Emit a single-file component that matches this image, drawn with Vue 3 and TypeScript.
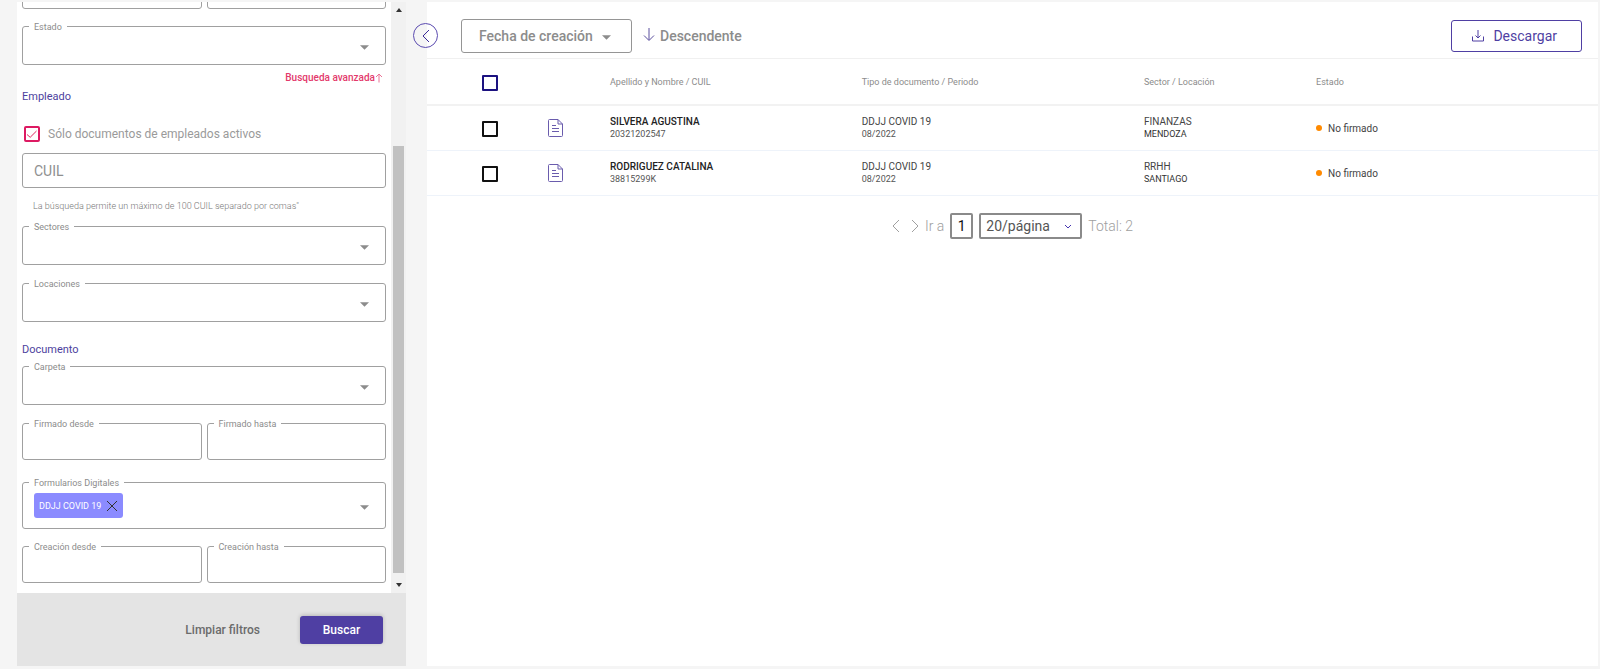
<script setup lang="ts">
import { ref } from 'vue'

interface DocumentRow {
  name: string
  cuil: string
  type: string
  period: string
  sector: string
  location: string
  status: string
  selected: boolean
}

const onlyActive = ref(true)
const cuil = ref('')
const page = ref('1')
const allSelected = ref(false)
const descending = ref(true)
const forms = ref<string[]>(['DDJJ COVID 19'])

const rows = ref<DocumentRow[]>([
  {
    name: 'SILVERA AGUSTINA',
    cuil: '20321202547',
    type: 'DDJJ COVID 19',
    period: '08/2022',
    sector: 'FINANZAS',
    location: 'MENDOZA',
    status: 'No firmado',
    selected: false,
  },
  {
    name: 'RODRIGUEZ CATALINA',
    cuil: '38815299K',
    type: 'DDJJ COVID 19',
    period: '08/2022',
    sector: 'RRHH',
    location: 'SANTIAGO',
    status: 'No firmado',
    selected: false,
  },
])

function toggleAll(): void {
  rows.value.forEach((row) => (row.selected = allSelected.value))
}

function removeForm(form: string): void {
  forms.value = forms.value.filter((item) => item !== form)
}
</script>

<template>
  <div class="page">
    <aside class="sidebar">
      <div class="scroll-area">
        <form class="filters" @submit.prevent>
          <div class="pair first">
            <div class="field date"><input type="text" aria-label="Período desde" /></div>
            <div class="field date"><input type="text" aria-label="Período hasta" /></div>
          </div>

          <div class="field estado">
            <label for="estado">Estado</label>
            <select id="estado"></select>
            <svg class="caret" viewBox="0 0 8 4"><path d="M0 0h8L4 4z" /></svg>
          </div>

          <button type="button" class="advanced">
            Busqueda avanzada<svg viewBox="0 0 8 10"><path d="M4 9.500V1M1 4l3-3 3 3" /></svg>
          </button>

          <h2 class="heading empleado">Empleado</h2>
          <label class="active-only">
            <input v-model="onlyActive" type="checkbox" />
            <svg class="tick" viewBox="0 0 16 16"><path d="M3 8.500l3.200 2.800L12.500 5" /></svg>
            <span>Sólo documentos de empleados activos</span>
          </label>

          <div class="field cuil">
            <input v-model="cuil" type="text" placeholder="CUIL" aria-label="CUIL" />
          </div>
          <p class="hint">La búsqueda permite un máximo de 100 CUIL separado por comas"</p>

          <div class="field sectores">
            <label for="sectores">Sectores</label>
            <select id="sectores"></select>
            <svg class="caret" viewBox="0 0 8 4"><path d="M0 0h8L4 4z" /></svg>
          </div>
          <div class="field locaciones">
            <label for="locaciones">Locaciones</label>
            <select id="locaciones"></select>
            <svg class="caret" viewBox="0 0 8 4"><path d="M0 0h8L4 4z" /></svg>
          </div>

          <h2 class="heading documento">Documento</h2>
          <div class="field carpeta">
            <label for="carpeta">Carpeta</label>
            <select id="carpeta"></select>
            <svg class="caret" viewBox="0 0 8 4"><path d="M0 0h8L4 4z" /></svg>
          </div>

          <div class="pair firmado">
            <div class="field date">
              <label for="firmado-desde">Firmado desde</label>
              <input id="firmado-desde" type="text" />
            </div>
            <div class="field date">
              <label for="firmado-hasta">Firmado hasta</label>
              <input id="firmado-hasta" type="text" />
            </div>
          </div>

          <div class="field formularios">
            <label for="formularios">Formularios Digitales</label>
            <span v-for="form in forms" :key="form" class="chip">
              {{ form }}
              <button type="button" :aria-label="'Quitar ' + form" @click="removeForm(form)">
                <svg viewBox="0 0 12 12"><path d="M1 1l10 10M11 1L1 11" /></svg>
              </button>
            </span>
            <select id="formularios"></select>
            <svg class="caret" viewBox="0 0 8 4"><path d="M0 0h8L4 4z" /></svg>
          </div>

          <div class="pair creacion">
            <div class="field date">
              <label for="creacion-desde">Creación desde</label>
              <input id="creacion-desde" type="text" />
            </div>
            <div class="field date">
              <label for="creacion-hasta">Creación hasta</label>
              <input id="creacion-hasta" type="text" />
            </div>
          </div>
        </form>

        <div class="scrollbar" aria-hidden="true">
          <svg viewBox="0 0 6 4"><path d="M0 4h6L3 0z" /></svg>
          <div class="track"><div class="thumb"></div></div>
          <svg viewBox="0 0 6 4"><path d="M0 0h6L3 4z" /></svg>
        </div>
      </div>

      <footer class="actions">
        <button type="button" class="clear">Limpiar filtros</button>
        <button type="button" class="search">Buscar</button>
      </footer>
    </aside>

    <main class="content">
      <button type="button" class="collapse" aria-label="Ocultar filtros">
        <svg viewBox="0 0 8 14"><path d="M7 1L1 7l6 6" /></svg>
      </button>

      <header class="toolbar">
        <div class="sort">
          <select aria-label="Ordenar por">
            <option>Fecha de creación</option>
          </select>
          <svg class="caret" viewBox="0 0 8 4"><path d="M0 0h8L4 4z" /></svg>
        </div>
        <button type="button" class="direction" @click="descending = !descending">
          <svg viewBox="0 0 12 14"><path d="M6 0v12M1 7.500l5 5 5-5" /></svg>
          {{ descending ? 'Descendente' : 'Ascendente' }}
        </button>
        <button type="button" class="download">
          <svg viewBox="0 0 12 12"><path d="M6 0v8M3.500 5.500L6 8l2.500-2.500M.5 6.500v4.500h11V6.500" /></svg>
          Descargar
        </button>
      </header>

      <table class="documents">
        <colgroup>
          <col class="col-check" />
          <col class="col-icon" />
          <col class="col-name" />
          <col class="col-type" />
          <col class="col-sector" />
          <col />
        </colgroup>
        <thead>
          <tr>
            <th class="check">
              <input v-model="allSelected" type="checkbox" aria-label="Seleccionar todos" @change="toggleAll" />
            </th>
            <th></th>
            <th>Apellido y Nombre / CUIL</th>
            <th>Tipo de documento / Periodo</th>
            <th>Sector / Locación</th>
            <th>Estado</th>
          </tr>
        </thead>
        <tbody>
          <tr v-for="row in rows" :key="row.cuil">
            <td class="check">
              <input v-model="row.selected" type="checkbox" :aria-label="'Seleccionar ' + row.name" />
            </td>
            <td class="icon">
              <svg viewBox="0 0 15 18">
                <path d="M1.500.5H10l4.500 4.500v11.500a1 1 0 0 1-1 1h-12a1 1 0 0 1-1-1v-15a1 1 0 0 1 1-1z" />
                <path d="M10 .5V5h4.500M4 6.500h4M4 9.500h7M4 12.500h7" />
              </svg>
            </td>
            <td>
              <span class="main-line strong">{{ row.name }}</span>
              <span class="sub-line">{{ row.cuil }}</span>
            </td>
            <td>
              <span class="main-line">{{ row.type }}</span>
              <span class="sub-line">{{ row.period }}</span>
            </td>
            <td>
              <span class="main-line">{{ row.sector }}</span>
              <span class="sub-line dark">{{ row.location }}</span>
            </td>
            <td><span class="status">{{ row.status }}</span></td>
          </tr>
        </tbody>
      </table>

      <nav class="pagination" aria-label="Paginación">
        <button type="button" class="step" aria-label="Anterior">
          <svg viewBox="0 0 8 14"><path d="M7 1L1 7l6 6" /></svg>
        </button>
        <button type="button" class="step" aria-label="Siguiente">
          <svg viewBox="0 0 8 14"><path d="M1 1l6 6-6 6" /></svg>
        </button>
        <label for="page">Ir a</label>
        <input id="page" v-model="page" type="text" />
        <div class="page-size">
          <select aria-label="Resultados por página">
            <option>20/página</option>
          </select>
          <svg viewBox="0 0 8 5"><path d="M1 1l3 3 3-3" /></svg>
        </div>
        <span>Total: {{ rows.length }}</span>
      </nav>
    </main>
  </div>
</template>

<style>
body {
  background: #f5f5f5;
}
</style>

<style scoped>
.page {
  box-sizing: border-box;
  display: flex;
  gap: 21px;
  height: 100vh;
  padding: 2px 2px 3px 17px;
  font-family: Roboto, "Liberation Sans", sans-serif;
  color: #8c8c8c;
}

.page *,
.page *::before {
  box-sizing: border-box;
}

button,
input,
select {
  margin: 0;
  padding: 0;
  border: 0;
  background: none;
  color: inherit;
  font: inherit;
  appearance: none;
}

button,
select {
  cursor: pointer;
}

svg {
  display: block;
  flex: none;
  fill: none;
  stroke: currentColor;
}

.sidebar {
  display: flex;
  flex: none;
  flex-direction: column;
  width: 389px;
  background: #fff;
}

.scroll-area {
  display: flex;
  flex: 1;
  min-height: 0;
  overflow: hidden;
}

.filters {
  display: flex;
  flex: 1;
  flex-direction: column;
  justify-content: flex-end;
  min-width: 0;
  padding: 0 5px 10px;
}

.filters > * {
  flex: none;
}

.field {
  position: relative;
  display: flex;
  align-items: center;
  height: 39px;
  border: 1px solid #a0a0a0;
  border-radius: 3px;
}

.field label {
  position: absolute;
  top: -6px;
  left: 6px;
  padding: 0 5px;
  background: #fff;
  font-size: 9px;
  line-height: 12px;
}

.field select,
.field input {
  flex: 1;
  align-self: stretch;
  min-width: 0;
  padding: 0 11px;
}

.caret {
  position: absolute;
  right: 16px;
  width: 9px;
  height: 5px;
  margin-top: 3px;
  fill: #8c8c8c;
  stroke: none;
  pointer-events: none;
}

.pair {
  display: grid;
  grid-template-columns: repeat(2, minmax(0, 1fr));
  gap: 5px;
}

.field.date {
  height: 37px;
}

.estado {
  margin-top: 17px;
}

.advanced {
  display: flex;
  align-items: center;
  align-self: flex-end;
  margin: 5px 3px 0 0;
  color: #e33a6c;
  font-size: 10px;
  font-weight: 500;
  line-height: 16px;
}

.advanced svg {
  width: 8px;
  height: 10px;
  opacity: 0.7;
}

.heading {
  margin: 0;
  color: #4d3f9e;
  font-size: 11px;
  font-weight: 400;
  line-height: 16px;
}

.empleado {
  margin-top: 3px;
}

.active-only {
  position: relative;
  display: flex;
  align-items: center;
  gap: 8px;
  margin: 21px 0 0 2px;
  font-size: 12px;
  line-height: 16px;
}

.active-only span {
  color: #9a9a9a;
}

.active-only input {
  width: 16px;
  height: 16px;
  border: 2px solid #dd1a62;
  border-radius: 2px;
}

.tick {
  position: absolute;
  left: 0;
  width: 16px;
  height: 16px;
  color: #e0245e;
  pointer-events: none;
  visibility: hidden;
}

.active-only input:checked + .tick {
  visibility: visible;
}

.field.cuil {
  height: 35px;
  margin-top: 11px;
  font-size: 14px;
}

.cuil input::placeholder {
  color: #8f8f8f;
}

.hint {
  margin: 12px 0 0 11px;
  font-size: 9px;
  font-weight: 300;
  line-height: 12px;
  color: #777;
}

.sectores {
  margin-top: 14px;
}

.locaciones,
.carpeta + .firmado {
  margin-top: 18px;
}

.documento {
  margin-top: 20px;
}

.carpeta {
  margin-top: 8px;
}

.field.formularios {
  height: 47px;
  margin-top: 22px;
  padding-left: 11px;
}

.creacion {
  margin-top: 17px;
}

.chip {
  display: flex;
  align-items: center;
  gap: 5px;
  height: 25px;
  padding: 0 5px;
  border-radius: 3px;
  background: #8b8bff;
  color: #fff;
  font-size: 9px;
}

.chip svg {
  width: 12px;
  height: 12px;
  color: #333;
}

.scrollbar {
  display: flex;
  flex: none;
  flex-direction: column;
  align-items: center;
  gap: 6px;
  width: 15px;
  padding: 6px 0;
  background: #f1f1f1;
}

.scrollbar svg {
  width: 6px;
  height: 4px;
  fill: #333;
  stroke: none;
}

.track {
  display: flex;
  flex: 1;
  flex-direction: column;
  justify-content: flex-end;
  align-self: stretch;
  padding: 0 2px 4px;
}

.thumb {
  height: 77%;
  background: #c1c1c1;
}

.actions {
  display: flex;
  flex: none;
  align-items: center;
  justify-content: flex-end;
  gap: 40px;
  height: 73px;
  padding-right: 23px;
  background: #e4e4e4;
  font-size: 12px;
  font-weight: 500;
}

.clear {
  color: #6b6b6b;
}

.search {
  width: 83px;
  height: 28px;
  border-radius: 3px;
  background: #4f3fa3;
  box-shadow: 0 -1px 4px rgba(0, 0, 0, 0.2);
  color: #fff;
}

.content {
  position: relative;
  flex: 1;
  min-width: 0;
  background: #fff;
}

.collapse {
  position: absolute;
  top: 21px;
  left: -14px;
  display: flex;
  align-items: center;
  justify-content: center;
  width: 25px;
  height: 25px;
  border: 1px solid #5b4bb0;
  border-radius: 50%;
  color: #3a2a98;
}

.collapse svg {
  width: 8px;
  height: 14px;
}

.toolbar {
  display: flex;
  align-items: center;
  height: 57px;
  padding: 12px 16px 0 34px;
  border-bottom: 1px solid #f0f0f0;
  font-size: 14px;
}

.sort {
  position: relative;
  display: flex;
  align-items: center;
  height: 34px;
  border: 1px solid #959595;
  border-radius: 3px;
}

.sort select {
  align-self: stretch;
  padding: 0 38px 0 17px;
  font-weight: 500;
}

.sort .caret {
  right: 20px;
}

.direction {
  display: flex;
  align-items: center;
  gap: 5px;
  margin-left: 11px;
  font-weight: 500;
}

.direction svg {
  width: 12px;
  height: 14px;
  margin-bottom: 3px;
  color: #5b4f9e;
}

.download {
  display: flex;
  align-items: center;
  gap: 9px;
  height: 32px;
  margin-left: auto;
  padding: 0 24px 0 20px;
  border: 1px solid #4f3fa3;
  border-radius: 3px;
  color: #4f3fa3;
}

.download svg {
  width: 12px;
  height: 12px;
}

.documents {
  width: 100%;
  border-spacing: 0;
  table-layout: fixed;
}

.col-check {
  width: 110px;
}

.col-icon {
  width: 73px;
}

.col-name {
  width: 21.500%;
}

.col-type {
  width: 24.100%;
}

.col-sector {
  width: 14.700%;
}

th,
td {
  padding: 0;
  text-align: left;
  vertical-align: middle;
}

th {
  height: 47px;
  border-bottom: 2px solid #f2f2f2;
  font-size: 9px;
  font-weight: 400;
}

td {
  height: 45px;
  border-bottom: 1px solid #eef3fa;
  color: #444;
}

.check {
  padding: 2px 0 0 55px;
}

.check input {
  display: block;
  width: 16px;
  height: 16px;
  border: 2px solid #111;
  border-radius: 1px;
}

th.check input {
  border-color: #1c1280;
}

.check input:checked {
  background: #4f3fa3;
}

.icon {
  padding-left: 11px;
}

.icon svg {
  width: 15px;
  height: 18px;
  color: #6a5cad;
}

.main-line,
.sub-line {
  display: block;
  font-size: 10px;
  line-height: 13px;
}

.strong {
  color: #222;
  font-weight: 500;
}

.sub-line {
  color: #555;
  font-size: 9px;
}

.sub-line.dark {
  color: #333;
}

.status {
  display: flex;
  align-items: center;
  gap: 6px;
  font-size: 10px;
}

.status::before {
  width: 6px;
  height: 6px;
  border-radius: 50%;
  background: #ff8a00;
  content: "";
}

.pagination {
  display: flex;
  align-items: center;
  justify-content: center;
  gap: 6px;
  margin-top: 17px;
  color: #a0a0a0;
  font-size: 14px;
  font-weight: 300;
}

.step + .step {
  margin-left: 5px;
}

.step svg {
  width: 8px;
  height: 14px;
}

.pagination input {
  width: 23px;
  height: 26px;
  border: 2px solid #8a8a8a;
  border-radius: 2px;
  color: #111;
  font-weight: 400;
  text-align: center;
}

.page-size {
  position: relative;
  display: flex;
  align-items: center;
  width: 103px;
  height: 26px;
  border: 2px solid #8a8a8a;
  border-radius: 2px;
  color: #555;
  font-weight: 400;
}

.page-size select {
  flex: 1;
  align-self: stretch;
  padding-left: 5px;
}

.page-size svg {
  position: absolute;
  right: 8px;
  width: 8px;
  height: 5px;
  color: #4636b0;
  pointer-events: none;
}
</style>
